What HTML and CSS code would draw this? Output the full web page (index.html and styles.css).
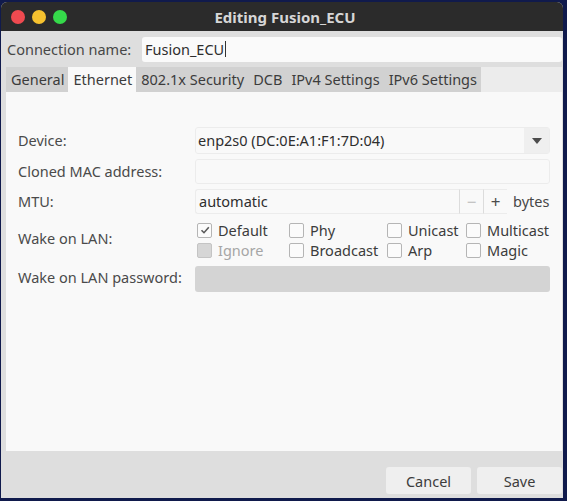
FILE: index.html
```html
<!DOCTYPE html>
<html>
<head>
<meta charset="utf-8">
<link rel="stylesheet" href="styles.css">
</head>
<body>
<div class="window">
  <div class="titlebar">
    <div class="lights">
      <span class="light red"></span>
      <span class="light yellow"></span>
      <span class="light green"></span>
    </div>
    <div class="title">Editing Fusion_ECU</div>
  </div>
  <div class="body">
    <div class="conn-row">
      <span class="conn-label">Connection name:</span>
      <div class="entry conn-entry">Fusion_ECU<span class="caret"></span></div>
    </div>
    <div class="notebook">
      <div class="tabs">
        <div class="tab">General</div>
        <div class="tab active">Ethernet</div>
        <div class="tab">802.1x Security</div>
        <div class="tab">DCB</div>
        <div class="tab">IPv4 Settings</div>
        <div class="tab">IPv6 Settings</div>
        <div class="tab-fill"></div>
      </div>
      <div class="page">
        <div class="form">
          <div class="label">Device:</div>
          <div class="combo">
            <span class="combo-text">enp2s0 (DC:0E:A1:F1:7D:04)</span>
            <span class="combo-btn"><svg width="10" height="6" viewBox="0 0 10 6"><path d="M0 0H10L5 6Z" fill="#4c4c4c"/></svg></span>
          </div>
          <div class="label">Cloned MAC address:</div>
          <div class="entry plain"></div>
          <div class="label">MTU:</div>
          <div class="mtu">
            <div class="entry plain mtu-entry">automatic</div>
            <span class="spin minus">−</span>
            <span class="spin plus">+</span>
            <span class="bytes">bytes</span>
          </div>
          <div class="label wol-label">Wake on LAN:</div>
          <div class="checks">
            <label class="chk"><span class="box checked"><svg width="12" height="12" viewBox="0 0 12 12"><path d="M2.5 6.2L5 8.7L9.8 3.2" fill="none" stroke="#5a5a5a" stroke-width="1.6"/></svg></span>Default</label>
            <label class="chk"><span class="box"></span>Phy</label>
            <label class="chk"><span class="box"></span>Unicast</label>
            <label class="chk"><span class="box"></span>Multicast</label>
            <label class="chk disabled"><span class="box"></span>Ignore</label>
            <label class="chk"><span class="box"></span>Broadcast</label>
            <label class="chk"><span class="box"></span>Arp</label>
            <label class="chk"><span class="box"></span>Magic</label>
          </div>
          <div class="label">Wake on LAN password:</div>
          <div class="entry disabled-entry"></div>
        </div>
      </div>
    </div>
    <div class="buttons">
      <button class="btn">Cancel</button>
      <button class="btn">Save</button>
    </div>
  </div>
</div>
</body>
</html>
```

FILE: styles.css
```css
* { box-sizing: border-box; }
html, body { margin: 0; padding: 0; }
body {
  width: 567px;
  height: 501px;
  background: #101a4c;
  font-family: "Noto Sans", "DejaVu Sans", sans-serif;
  font-size: 14.5px;
  color: #474747;
  overflow: hidden;
  padding: 2px 4px 3px 1px;
}
.window {
  width: 562px;
  height: 496px;
  display: flex;
  flex-direction: column;
  background: #dedede;
  border-radius: 6px 6px 0 0;
  overflow: hidden;
}
.titlebar {
  height: 29px;
  background: #2b2b2b;
  display: flex;
  align-items: center;
  position: relative;
  flex: none;
}
.lights { display: flex; gap: 7px; padding-left: 10px; }
.light { width: 14px; height: 14px; border-radius: 50%; display: block; }
.red { background: #ef4a50; }
.yellow { background: #f6c22f; }
.green { background: #35d94a; }
.title {
  position: absolute;
  left: 0; right: 0; top: 0; bottom: 0;
  display: flex; align-items: center; justify-content: center;
  color: #d6d6d6;
  font-weight: bold;
  font-size: 15px;
  padding-left: 6px;
}
.body {
  flex: 1;
  display: flex;
  flex-direction: column;
  padding: 5px 1px 4px 5px;
}
.conn-row {
  display: flex;
  align-items: center;
  height: 26px;
}
.conn-label { width: 136px; padding-left: 1px; }
.entry {
  background: #fafafa;
  border-radius: 3px;
  height: 25px;
  display: flex;
  align-items: center;
  padding-left: 3px;
  color: #2e2e2e;
}
.conn-entry { flex: 1; }
.caret { display: inline-block; width: 1px; height: 16px; background: #333; margin-left: 1px; }
.notebook {
  margin-top: 5px;
  display: flex;
  flex-direction: column;
  flex: none;
  height: 384px;
}
.tabs {
  display: flex;
  height: 25px;
  flex: none;
}
.tab {
  background: #d1d1d1;
  padding: 0 4px 1px 5px;
  display: flex;
  align-items: center;
  color: #3c3c3c;
}
.tab.active { background: #f9f9f9; }
.tab-fill { flex: 1; background: #ececec; }
.page {
  flex: 1;
  background: #f9f9f9;
  padding: 35px 12px 0 12px;
}
.form {
  display: grid;
  grid-template-columns: 177px 355px;
  grid-auto-rows: auto;
  row-gap: 5px;
  align-items: center;
}
.label { color: #4a4a4a; padding-bottom: 2px; }
.combo {
  height: 27px;
  display: flex;
  align-items: center;
  border: 1px solid #ececec;
  border-radius: 3px;
  color: #2e2e2e;
}
.combo-text { flex: 1; padding-left: 2px; padding-bottom: 1px; }
.combo-btn {
  width: 25px; height: 25px;
  background: #efefef;
  display: flex; align-items: center; justify-content: center;
}
.entry.plain {
  background: #f9f9f9;
  border: 1px solid #ececec;
  border-radius: 3px;
  padding-bottom: 1px;
}
.mtu { display: flex; align-items: center; }
.mtu-entry { width: 264px; border-right: none !important; border-radius: 3px 0 0 3px !important; }
.spin {
  width: 24px; height: 25px;
  display: flex; align-items: center; justify-content: center;
  border-left: 1px solid #dcdcdc;
  border-top: 1px solid #ececec;
  border-bottom: 1px solid #ececec;
  font-size: 17px;
  color: #4c4c4c;
}
.spin.minus { color: #b8b8b8; }
.bytes { padding-left: 6px; padding-bottom: 1px; }
.wol-label { align-self: center; }
.checks {
  display: grid;
  grid-template-columns: 92px 98px 79px auto;
  row-gap: 2px;
  padding: 2px 0 0 2px;
}
.chk {
  display: flex;
  align-items: center;
  height: 18px;
  gap: 6px;
  color: #3c3c3c;
}
.box {
  width: 15px; height: 15px;
  border: 1px solid #b5b5b5;
  border-radius: 2px;
  background: #fbfbfb;
  display: flex; align-items: center; justify-content: center;
  flex: none;
}
.chk.disabled { color: #a6a6a6; }
.chk.disabled .box { background: #d6d6d6; border-color: #c4c4c4; }
.disabled-entry { background: #d4d4d4; height: 26px; margin-top: 2px; }
.buttons {
  margin-top: auto;
  display: flex;
  justify-content: flex-end;
  gap: 6px;
  padding-bottom: 0;
}
.btn {
  width: 85px;
  height: 27px;
  background: #efefef;
  border: none;
  border-radius: 3px;
  font-family: inherit;
  font-size: 14.5px;
  color: #3c3c3c;
  padding: 0;
}
```
